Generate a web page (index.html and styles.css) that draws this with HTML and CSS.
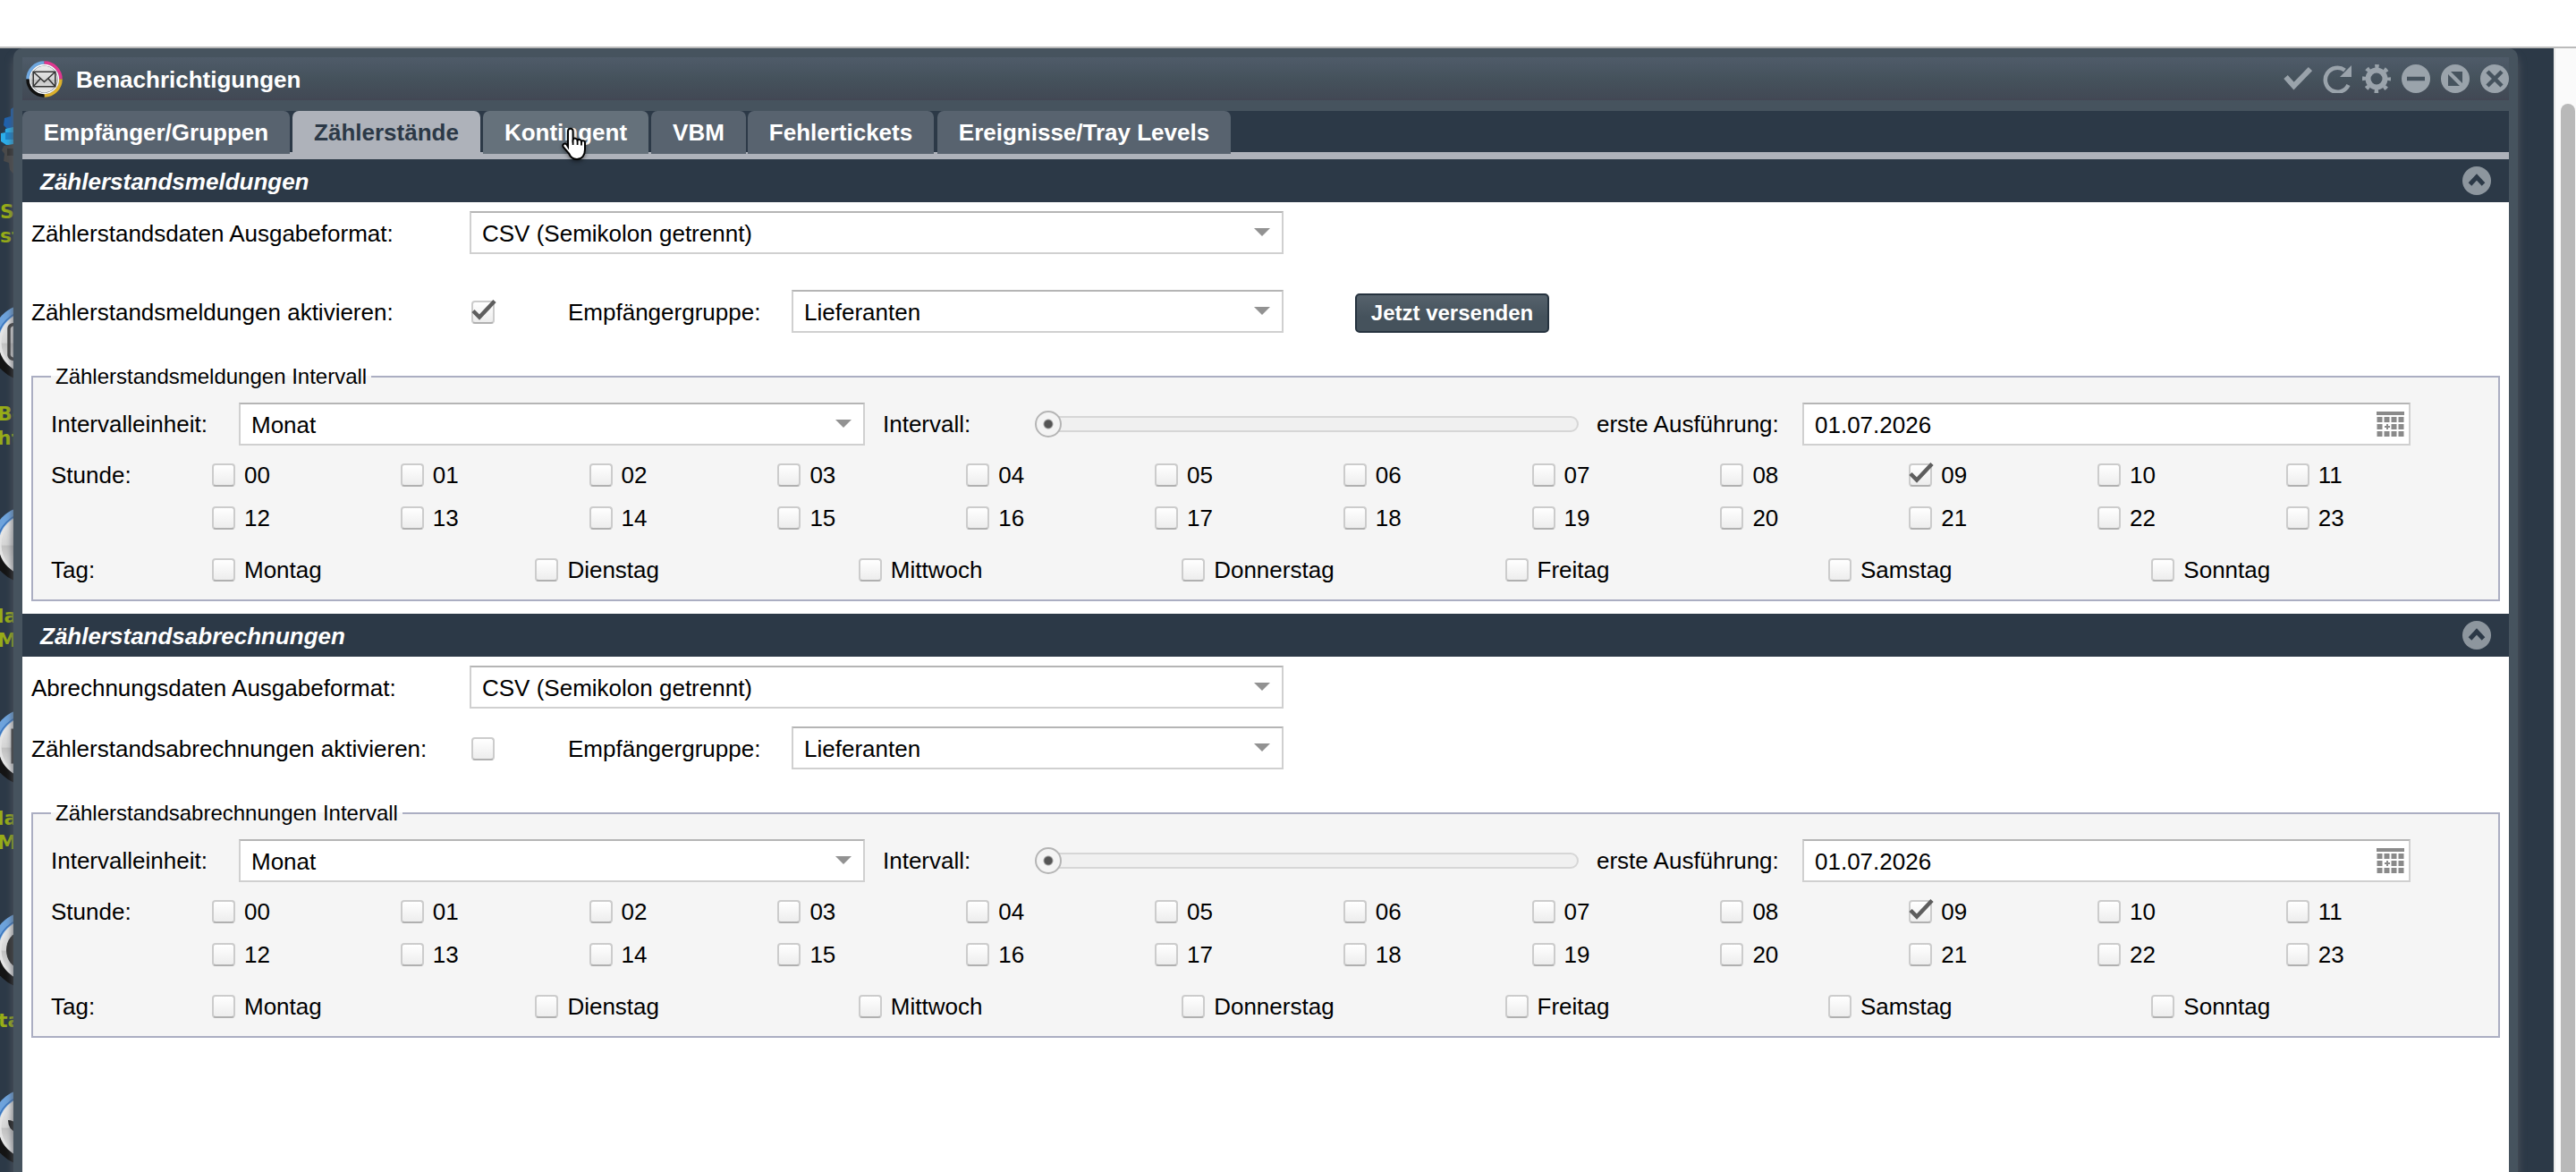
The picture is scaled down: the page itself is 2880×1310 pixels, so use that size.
FILE: index.html
```html
<!DOCTYPE html>
<html lang="de">
<head>
  <meta charset="utf-8">
  <title>Benachrichtigungen</title>
  <link rel="stylesheet" href="styles.css">
</head>
<body>
  <svg class="defs" width="0" height="0">
    <defs>
      <linearGradient id="gloss" x1="0" y1="0" x2="0" y2="1">
        <stop offset="0" stop-color="#ececec"/>
        <stop offset=".5" stop-color="#d6d6d6"/>
        <stop offset=".52" stop-color="#c2c2c2"/>
        <stop offset="1" stop-color="#ececec"/>
      </linearGradient>
    </defs>
    <symbol id="check" viewBox="0 0 28 28"><path d="M2 14.500l7 7L26 3.500" fill="none" stroke="#5e5e5e" stroke-width="4.500"/></symbol>
    <symbol id="up" viewBox="0 0 32 32"><circle cx="16" cy="16" r="16" fill="#8d969e"/><path d="M8.500 20 L16 12 L23.500 20" fill="none" stroke="#2c3947" stroke-width="5"/></symbol>
    <symbol id="calendar" viewBox="0 0 32 30">
      <path d="M0 3h31" stroke="#8a8a8a" stroke-width="4"/>
      <path d="M.5 10h31M.5 26h31M.5 18h6.500M16.500 18h15" stroke="#8a8a8a" stroke-width="6" stroke-dasharray="6 2"/>
      <path d="M9 18h6M12 15v6" stroke="#8a8a8a" stroke-width="2"/>
    </symbol>
    <symbol id="orb" viewBox="0 0 88 88">
      <circle cx="44" cy="44" r="43.500" fill="#141414"/>
      <path d="M.5 44A43.500 43.500 0 0 1 44 .5V44Z" fill="#6ea3dc"/>
      <circle cx="44" cy="44" r="36" fill="none" stroke="#3c76bd" stroke-width="1.500" stroke-dasharray="56.500 170" transform="rotate(180 44 44)"/>
      <circle cx="44" cy="44" r="33" fill="url(#gloss)" stroke="#e4e4e4" stroke-width="3"/>
    </symbol>
  </svg>

  <div class="desktop">
    <div class="launcher">
      <svg class="cog" viewBox="0 0 40 76"><path d="M15 0l-3 2v8l-7 2-1 8 4 4-4 3h11z" fill="#1f62ae"/><path d="M15 22l-9 2v4l-5 1v9l6 4h8z" fill="#2caeea"/><path d="M6 28h9v8H6z" fill="#1d86cc"/><path d="M15 41l-11 2-2 5 3 4-1 8 6 2 1 8 4 4z" fill="#494949"/><path d="M15 46H8v8h7z" fill="#333"/></svg>
      <div class="caption caption-1">S<br>st</div>
      <svg class="orb orb-1"><use href="#orb"/><path d="M36 25q-14-4-15 3v30q1 7 15 3" fill="none" stroke="#444" stroke-width="3.500"/></svg>
      <div class="caption caption-2">Be<br>ht</div>
      <svg class="orb orb-2"><use href="#orb"/></svg>
      <div class="caption caption-3">la<br>Ma</div>
      <svg class="orb orb-3"><use href="#orb"/><path d="M32 25h-7v36h8" fill="none" stroke="#444" stroke-width="3"/></svg>
      <div class="caption caption-4">la<br>M</div>
      <svg class="orb orb-4"><use href="#orb"/><ellipse cx="34" cy="44" rx="16" ry="20" fill="#333"/></svg>
      <div class="caption caption-5">ta</div>
      <svg class="orb orb-5"><use href="#orb"/><path d="M20 36q6 0 10 5v9q-10-3-10-14z" fill="#222"/></svg>
    </div>

    <div class="window">
      <header class="window-header">
        <svg class="app-icon" viewBox="0 0 40 40">
          <circle cx="20" cy="20" r="14.500" fill="url(#gloss)"/>
          <g fill="none" stroke-width="3.500">
            <path d="M2 20A18 18 0 0 1 20 2" stroke="#6fa8e0"/>
            <path d="M20 2A18 18 0 0 1 38 20" stroke="#e0388f"/>
            <path d="M38 20A18 18 0 0 1 20 38" stroke="#dcb02c"/>
            <path d="M20 38A18 18 0 0 1 2 20" stroke="#111"/>
          </g>
          <circle cx="20" cy="20" r="15.500" fill="none" stroke="#fff" stroke-width="1.500"/>
          <path d="M8 12h24v16H8zM8 12l12 11 12-11M8 28l8-9M32 28l-8-9" fill="none" stroke="#333" stroke-width="1.500"/>
        </svg>
        <h1 class="window-title">Benachrichtigungen</h1>
        <div class="window-tools">
          <svg viewBox="0 0 32 32"><path d="M2.500 14l9 10L30 5" fill="none" stroke="#9aa3ab" stroke-width="6"/></svg>
          <svg viewBox="0 0 32 32"><path d="M24.500 6.500A13.500 13.500 0 1 0 28.500 23" fill="none" stroke="#9aa3ab" stroke-width="4.500"/><path d="M32 1v13H19z" fill="#9aa3ab"/></svg>
          <svg viewBox="0 0 32 32"><circle cx="16" cy="16" r="9.500" fill="none" stroke="#9aa3ab" stroke-width="6"/><circle cx="16" cy="16" r="14" fill="none" stroke="#9aa3ab" stroke-width="4" stroke-dasharray="4.500 6.500" stroke-dashoffset="2.250"/></svg>
          <svg viewBox="0 0 32 32"><circle cx="16" cy="16" r="16" fill="#9aa3ab"/><path d="M6 16h20" stroke="#46535e" stroke-width="4.500"/></svg>
          <svg viewBox="0 0 32 32"><circle cx="16" cy="16" r="16" fill="#9aa3ab"/><path d="M11 8h13v13zM8 11v13h13z" fill="#46535e"/></svg>
          <svg viewBox="0 0 32 32"><circle cx="16" cy="16" r="16" fill="#9aa3ab"/><path d="M8 8l16 16M24 8L8 24" stroke="#46535e" stroke-width="4.500"/></svg>
        </div>
      </header>

      <nav class="tabs">
        <a class="tab tab-groups">Empfänger/Gruppen</a>
        <a class="tab tab-meter active">Zählerstände</a>
        <a class="tab tab-quota hover">Kontingent</a>
        <a class="tab tab-vbm">VBM</a>
        <a class="tab tab-tickets">Fehlertickets</a>
        <a class="tab tab-events">Ereignisse/Tray Levels</a>
      </nav>

      <main class="content">
        <section class="panel panel-messages">
          <h2 class="panel-title"><span>Zählerstandsmeldungen</span><svg><use href="#up"/></svg></h2>
          <div class="row">
            <span class="label">Zählerstandsdaten Ausgabeformat:</span>
            <div class="select select-format">CSV (Semikolon getrennt)</div>
          </div>
          <div class="row row-activate">
            <span class="label">Zählerstandsmeldungen aktivieren:</span>
            <span class="box"><svg><use href="#check"/></svg></span>
            <span class="label-group">Empfängergruppe:</span>
            <div class="select select-group">Lieferanten</div>
            <button class="send">Jetzt versenden</button>
          </div>
          <div class="interval" data-legend="Zählerstandsmeldungen Intervall"></div>
        </section>

        <section class="panel panel-billing">
          <h2 class="panel-title"><span>Zählerstandsabrechnungen</span><svg><use href="#up"/></svg></h2>
          <div class="row">
            <span class="label">Abrechnungsdaten Ausgabeformat:</span>
            <div class="select select-format">CSV (Semikolon getrennt)</div>
          </div>
          <div class="row row-activate">
            <span class="label">Zählerstandsabrechnungen aktivieren:</span>
            <span class="box"></span>
            <span class="label-group">Empfängergruppe:</span>
            <div class="select select-group">Lieferanten</div>
          </div>
          <div class="interval" data-legend="Zählerstandsabrechnungen Intervall"></div>
        </section>
      </main>
    </div>

    <div class="scrollbar"><div class="thumb"></div></div>
    <svg class="cursor" viewBox="0 0 32 40"><path d="M9 23V5.500a2.800 2.800 0 0 1 5.600 0V15a2.700 2.700 0 0 1 5 .8 2.500 2.500 0 0 1 4.400 1.200 2.300 2.300 0 0 1 4 1.800V26c0 6-3 11-9 11-5 0-7.500-3-9-6.500L3.500 23c-1-3 2-4.500 4-2.500z" fill="#fff" stroke="#000" stroke-width="2"/><path d="M14.600 15v6M19.600 16v5M24 17v4.500" stroke="#000" stroke-width="1.800"/></svg>
  </div>
  <script src="script.js"></script>
</body>
</html>
```

FILE: script.js
```js
// both interval boxes hold the same set of fields
const days = ['Montag', 'Dienstag', 'Mittwoch', 'Donnerstag', 'Freitag', 'Samstag', 'Sonntag'];
const tick = '<svg><use href="#check"/></svg>';

function option(text, checked) {
  return `<span class="option"><span class="box">${checked ? tick : ''}</span>${text}</span>`;
}

const hours = [];
for (let i = 0; i < 24; i++) {
  hours.push(option(String(i).padStart(2, '0'), i === 9));
}

document.querySelectorAll('.interval').forEach(el => {
  el.innerHTML = `
    <div class="legend">${el.dataset.legend}</div>
    <div class="interval-row">
      <span class="label-unit">Intervalleinheit:</span>
      <div class="select select-unit">Monat</div>
      <span class="label-interval">Intervall:</span>
      <div class="slider"><span class="handle"></span></div>
      <span class="label-first">erste Ausführung:</span>
      <div class="date">01.07.2026<svg><use href="#calendar"/></svg></div>
    </div>
    <div class="options hours">
      <span class="options-label">Stunde:</span>
      <div class="grid">${hours.join('')}</div>
    </div>
    <div class="options days">
      <span class="options-label">Tag:</span>
      <div class="grid">${days.map(d => option(d)).join('')}</div>
    </div>`;
});
```

FILE: styles.css
```css
* {
  box-sizing: border-box;
}
body {
  margin: 0;
  padding-top: 52px;
  height: 1310px;
  overflow: hidden;
  background: #fff;
  font-family: "Liberation Sans", Arial, sans-serif;
  font-size: 26px;
  line-height: 30px;
  color: #000;
}
.defs {
  position: absolute;
}
.desktop {
  position: relative;
  display: flex;
  height: 1258px;
  border-top: 2px solid #bbb;
  background: #2c3947;
  overflow: hidden;
}

/* desktop icons that stick out behind the window */
.launcher {
  position: relative;
  width: 15px;
  height: 1256px;
  flex: none;
}
.cog {
  position: absolute;
  left: 0;
  top: 66px;
  width: 40px;
  height: 76px;
}
.orb {
  position: absolute;
  left: -11px;
  width: 88px;
  height: 88px;
}
.orb-1 { top: 285px; }
.orb-2 { top: 511px; }
.orb-3 { top: 737px; }
.orb-4 { top: 964px; }
.orb-5 { top: 1162px; }
.caption {
  position: absolute;
  left: 0;
  font-family: "DejaVu Sans", sans-serif;
  font-size: 22px;
  font-weight: bold;
  line-height: 27px;
  color: #97ac17;
}
.caption-1 { top: 169px; }
.caption-2 { top: 395px; left: -3px; }
.caption-3 { top: 621px; left: -3px; }
.caption-4 { top: 847px; left: -3px; }
.caption-5 { top: 1073px; left: -2px; }

.window {
  position: relative;
  width: 2800px;
  height: 1300px;
  flex: none;
  padding: 10px 10px 0;
  border-radius: 10px 10px 0 0;
  background: #46535e;
  box-shadow: 0 8px 10px #555961;
}
.window-header {
  display: flex;
  align-items: center;
  height: 48px;
  padding-left: 4px;
  background: linear-gradient(#4f5b69, #45525c 50%, #424955 95%, #444653);
}
.app-icon {
  width: 41px;
  height: 41px;
}
.window-title {
  flex: 1;
  margin: 0 0 0 15px;
  padding-top: 2px;
  font-size: 26px;
  color: #fff;
}
.window-tools {
  display: flex;
  gap: 12px;
}
.window-tools svg {
  width: 32px;
  height: 32px;
}

.tabs {
  display: flex;
  height: 54px;
  margin-top: 12px;
  background: linear-gradient(#2c3947 46px, #aeb2ba 46px);
}
.tab {
  height: 48px;
  margin-right: 3px;
  border-radius: 7px 7px 0 0;
  background: #58636f;
  color: #fff;
  font-weight: bold;
  line-height: 48px;
  text-align: center;
}
.tab.active {
  background: #aeb2ba;
  color: #2c3947;
}
.tab.hover { background: #65717b; }
.tab-groups { width: 299px; }
.tab-meter { width: 210px; }
.tab-quota { width: 185px; }
.tab-vbm { width: 106px; margin-right: 2px; }
.tab-tickets { width: 208px; margin-right: 4px; }
.tab-events { width: 328px; }

.content {
  height: 1132px;
  background: #fff;
}
.panel-title {
  display: flex;
  align-items: center;
  justify-content: space-between;
  height: 48px;
  margin: 0 0 10px;
  padding: 0 20px;
  background: #2c3947;
  color: #fff;
  font-size: 26px;
  font-style: italic;
}
.panel-title span {
  padding-top: 2px;
}
.panel-title svg {
  width: 32px;
  height: 32px;
}
.row {
  display: flex;
  align-items: center;
  height: 48px;
  padding-left: 10px;
}
.label {
  width: 490px;
  padding-top: 1px;
}
.row-activate {
  margin-top: 40px;
}
.panel-billing .row-activate {
  margin-top: 20px;
}
.label-group {
  width: 250px;
  margin-left: 82px;
  padding-top: 1px;
}
.select,
.date {
  position: relative;
  height: 48px;
  padding-left: 12px;
  border: 2px solid #d0d0d0;
  border-top-color: #b5b5b5;
  background: #fff;
  line-height: 47px;
}
.select::after {
  content: "";
  position: absolute;
  right: 13px;
  top: 17px;
  border: 9px solid transparent;
  border-top-color: #929292;
  border-bottom: 0;
}
.select-format { width: 910px; }
.select-group { width: 550px; }
.select-unit { width: 700px; }
.send {
  width: 217px;
  height: 44px;
  margin: 4px 0 0 80px;
  padding: 0;
  border: 2px solid #26333f;
  border-radius: 5px;
  background: linear-gradient(#56626c, #45525c 60%);
  color: #fff;
  font-family: inherit;
  font-size: 24px;
  font-weight: bold;
}
.box {
  flex: none;
  width: 26px;
  height: 26px;
  border: 2px solid #ccc;
  border-bottom-color: #b0b0b0;
  border-radius: 4px;
  background: linear-gradient(#fff, #ededed);
}
.row .box {
  margin: 2px 0 0 2px;
}
.box svg {
  display: block;
  width: 28px;
  height: 28px;
  margin: -5px 0 0 -2px;
}

.interval {
  height: 252px;
  margin: 48px 10px 0;
  border: 2px solid #abaec2;
  background: #f5f5f5;
}
.legend {
  width: fit-content;
  height: 30px;
  margin: -16px 0 14px 20px;
  padding: 0 5px;
  background: linear-gradient(#fff 14px, #f5f5f5 14px);
  font-size: 24px;
}
.interval-row {
  display: flex;
  align-items: center;
  height: 48px;
  padding-left: 20px;
}
.label-unit { width: 210px; }
.label-interval {
  width: 174px;
  margin-left: 20px;
}
.slider {
  position: relative;
  width: 604px;
  height: 18px;
  border: 2px solid #d6d6d6;
  border-radius: 9px;
  background: #f0f0f0;
}
.handle {
  position: absolute;
  left: -6px;
  top: -8px;
  width: 30px;
  height: 30px;
  border: 2px solid #b5b5b5;
  border-radius: 50%;
  background: radial-gradient(circle, #555 4px, #f4f4f4 6px);
}
.label-first {
  width: 230px;
  margin-left: 20px;
}
.date { width: 680px; }
.date svg {
  position: absolute;
  right: 4px;
  top: 7px;
  width: 32px;
  height: 30px;
}
.options {
  display: flex;
  padding-left: 20px;
}
.options-label {
  width: 180px;
  line-height: 26px;
}
.hours { margin-top: 20px; }
.days { margin-top: 32px; }
.grid {
  display: grid;
  grid-template-columns: repeat(12, 210.800px);
  row-gap: 22px;
}
.days .grid {
  grid-template-columns: repeat(7, 361.400px);
}
.option {
  display: flex;
  align-items: center;
  gap: 10px;
  height: 26px;
}
.panel-billing {
  margin-top: 14px;
}

.scrollbar {
  position: relative;
  width: 25px;
  margin-left: auto;
  padding: 62px 0 0 6px;
  border-left: 2px solid #e8e8e8;
  background: #fafafa;
}
.thumb {
  width: 16px;
  height: 1300px;
  border-radius: 8px;
  background: #b9b9b9;
}
.cursor {
  position: absolute;
  left: 626px;
  top: 87px;
  width: 32px;
  height: 40px;
  filter: drop-shadow(0 2px 2px rgba(0,0,0,0.4));
}
```
